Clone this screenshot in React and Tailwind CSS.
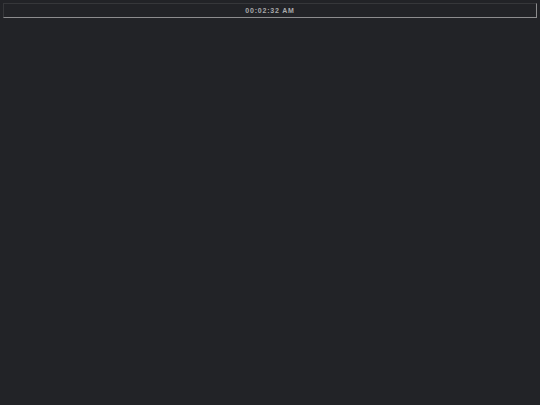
import React from "react";

export default function App() {
  return (
    <div className="h-[405px] w-full bg-[#222327] p-[3px]" style={{ fontFamily: "'Liberation Sans', Arial, sans-serif" }}>
      <div className="flex h-[15px] w-[534px] items-center justify-center border border-t-[#36373a] border-l-[#36373a] border-b-[#8c8c8e] border-r-[#8c8c8e] bg-[#222327]">
        <span className="text-[7px] font-bold leading-none tracking-[0.8px] text-[#a9a9ab]">00:02:32 AM</span>
      </div>
    </div>
  );
}
